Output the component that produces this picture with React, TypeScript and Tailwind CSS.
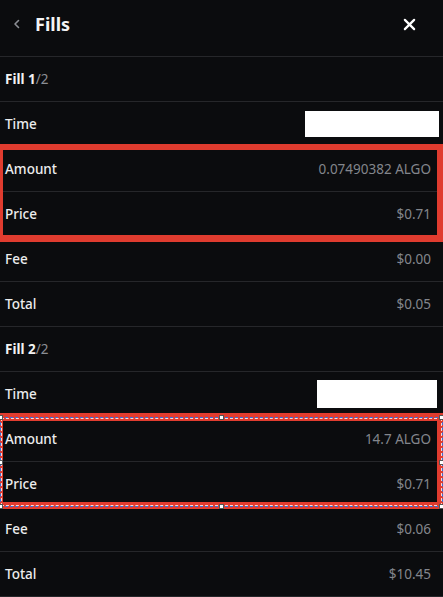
import { ReactNode } from "react";

type Row = { label: string; value?: string; time?: boolean };

const fill1: Row[] = [
  { label: "Time", time: true },
  { label: "Amount", value: "0.07490382 ALGO" },
  { label: "Price", value: "$0.71" },
  { label: "Fee", value: "$0.00" },
  { label: "Total", value: "$0.05" },
];

const fill2: Row[] = [
  { label: "Time", time: true },
  { label: "Amount", value: "14.7 ALGO" },
  { label: "Price", value: "$0.71" },
  { label: "Fee", value: "$0.06" },
  { label: "Total", value: "$10.45" },
];

const Line = ({ children }: { children: ReactNode }) => (
  <div className="flex h-[45px] items-center justify-between border-b border-[#26272a] pl-[5px] pr-[12px]">
    {children}
  </div>
);

const FillBlock = ({ n, rows, timeCls }: { n: number; rows: Row[]; timeCls: string }) => (
  <>
    <Line>
      <span className="text-[13.5px] font-bold text-[#f2f2f2]">
        Fill {n}
        <span className="font-normal text-[#8b8e94]">/2</span>
      </span>
    </Line>
    {rows.map((r) => (
      <Line key={r.label}>
        <span className="text-[13.5px] font-medium text-[#ededed]">{r.label}</span>
        {r.time ? (
          <div className={`bg-white ${timeCls}`} />
        ) : (
          <span className="text-[13.5px] text-[#83868c]">{r.value}</span>
        )}
      </Line>
    ))}
  </>
);

const Handle = ({ cls }: { cls: string }) => (
  <div className={`absolute h-[5px] w-[5px] border border-[#555] bg-white ${cls}`} />
);

export default function App() {
  return (
    <div
      className="relative h-[597px] w-[443px] overflow-hidden bg-[#0b0c0e]"
      style={{ fontFamily: '"Noto Sans", "Open Sans", sans-serif' }}
    >
      <div className="flex h-[57px] items-center justify-between border-b border-[#26272a] pb-[8px] pl-[11px] pr-[27px]">
        <div className="flex items-center gap-[12px]">
          <svg width="12" height="12" viewBox="0 0 12 12" fill="none">
            <path d="M7.5 2.5 4 6l3.5 3.5" stroke="#8b8e94" strokeWidth="1.6" strokeLinecap="round" strokeLinejoin="round" />
          </svg>
          <span className="text-[18px] font-bold text-[#f4f4f4]">Fills</span>
        </div>
        <svg width="13" height="13" viewBox="0 0 14 14" fill="none">
          <path d="M2 2l10 10M12 2 2 12" stroke="#ffffff" strokeWidth="2.4" strokeLinecap="round" />
        </svg>
      </div>

      <FillBlock n={1} rows={fill1} timeCls="-mr-[8px] h-[26px] w-[134px]" />
      <FillBlock n={2} rows={fill2} timeCls="-mr-[6px] h-[28px] w-[120px]" />

      {/* annotation boxes */}
      <div className="pointer-events-none absolute left-0 top-[144px] h-[98px] w-[443px] border-b-[7px] border-l-[3px] border-r-[6px] border-t-[6px] border-[#e03c2f]" />
      <div className="pointer-events-none absolute left-0 top-[413px] h-[96px] w-[443px] border-b-[7px] border-l-[3px] border-r-[6px] border-t-[8px] border-[#e03c2f]" />
      <div className="pointer-events-none absolute left-0 top-[417px] h-[90px] w-[443px] border border-dashed border-[#3b6fd6]" />
      <div className="pointer-events-none absolute left-[1px] top-[418px] h-[88px] w-[441px] border border-dashed border-white/80" />
      <Handle cls="left-[-2px] top-[415px]" />
      <Handle cls="left-[219px] top-[415px]" />
      <Handle cls="left-[439px] top-[415px]" />
      <Handle cls="left-[-2px] top-[460px]" />
      <Handle cls="left-[439px] top-[460px]" />
      <Handle cls="left-[-2px] top-[504px]" />
      <Handle cls="left-[219px] top-[504px]" />
      <Handle cls="left-[439px] top-[504px]" />
    </div>
  );
}
